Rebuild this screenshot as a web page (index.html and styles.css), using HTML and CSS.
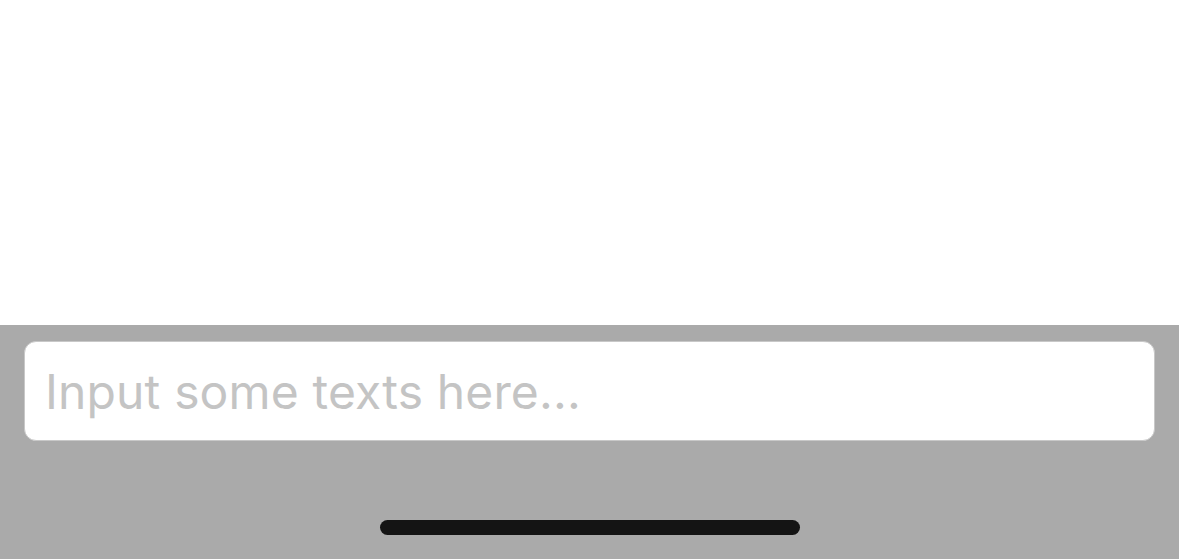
FILE: index.html
```html
<!DOCTYPE html>
<html>
<head>
<meta charset="utf-8">
<link rel="stylesheet" href="styles.css">
</head>
<body>
<div class="page">
  <div class="content"></div>
  <div class="bar">
    <div class="field"><span class="placeholder">Input some texts here...</span></div>
    <div class="home-wrap"><div class="home"></div></div>
  </div>
</div>
</body>
</html>
```
FILE: styles.css
```css
html, body {
  margin: 0;
  padding: 0;
  background: #ffffff;
}
.page {
  width: 1179px;
  height: 559px;
  display: flex;
  flex-direction: column;
  overflow: hidden;
}
.content {
  height: 325px;
  background: #ffffff;
}
.bar {
  flex: 1;
  background: #aaaaaa;
  padding: 16px 24px 0 24px;
  display: flex;
  flex-direction: column;
}
.field {
  height: 98px;
  background: #ffffff;
  border: 1px solid #c8c8c8;
  border-radius: 12px;
  display: flex;
  align-items: center;
  padding: 0 20px;
}
.placeholder {
  font-family: Inter, "Liberation Sans", Arial, sans-serif;
  font-size: 48px;
  color: #c4c4c4;
  letter-spacing: 0.15px;
  position: relative;
  top: 0px;
}
.home-wrap {
  display: flex;
  justify-content: center;
  padding-top: 79px;
}
.home {
  width: 420px;
  height: 15px;
  border-radius: 8px;
  background: #141414;
}
```
